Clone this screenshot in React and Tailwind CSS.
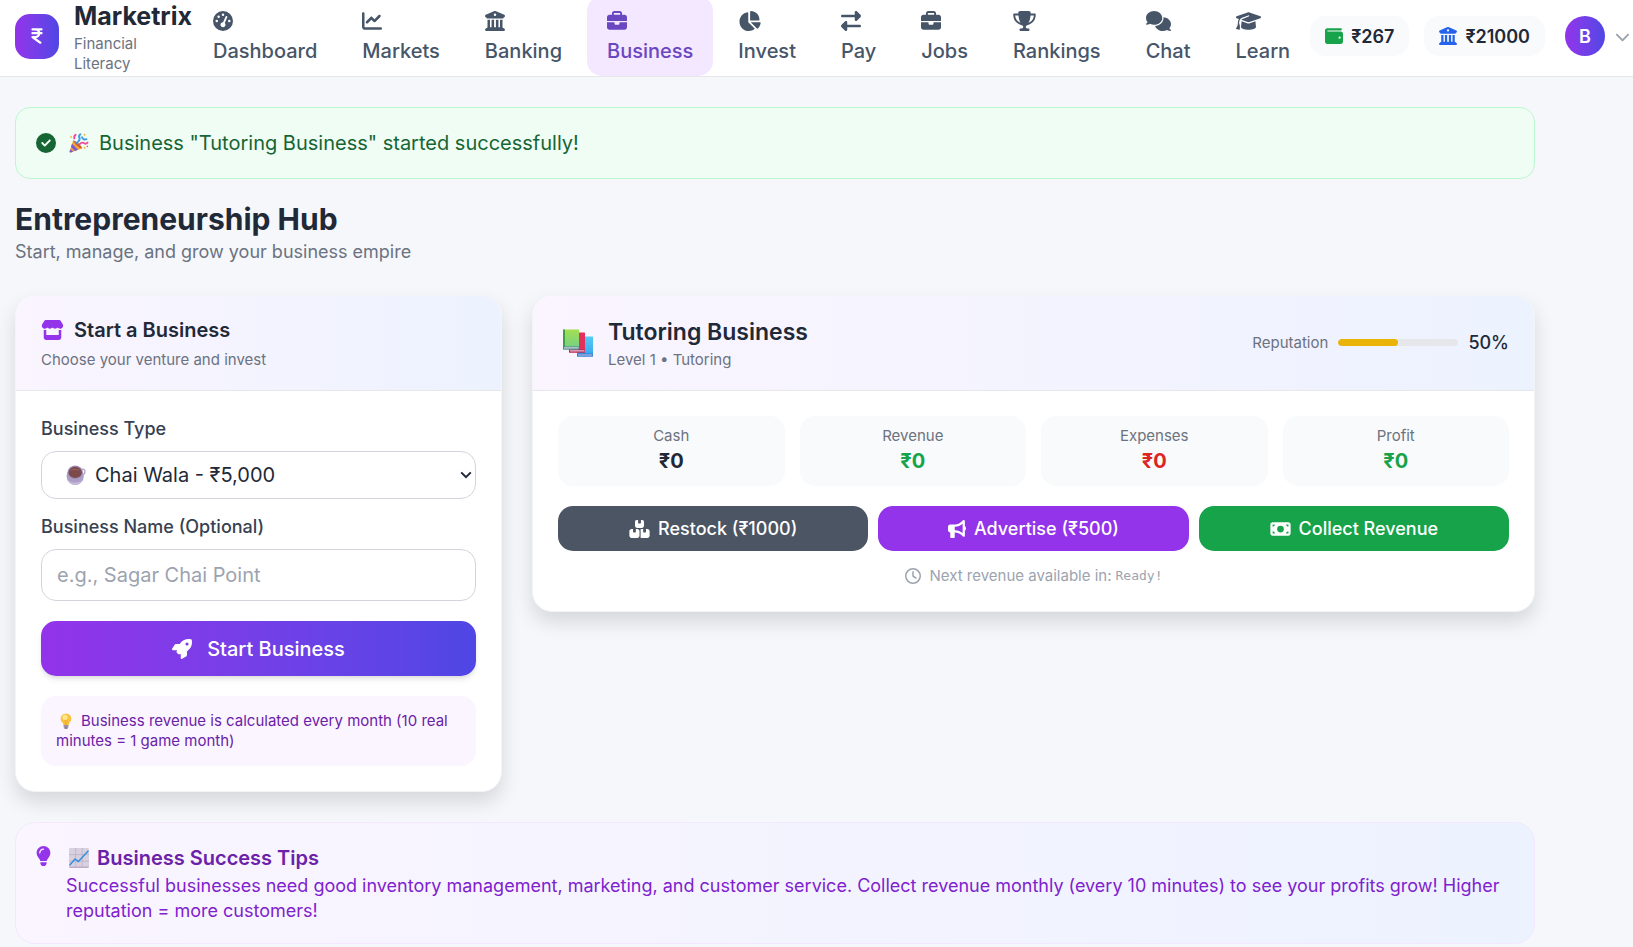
import { useState } from 'react'
import {
  FaIndianRupeeSign,
  FaGaugeHigh,
  FaChartLine,
  FaBuildingColumns,
  FaBriefcase,
  FaChartPie,
  FaRightLeft,
  FaTrophy,
  FaComments,
  FaGraduationCap,
  FaWallet,
  FaChevronDown,
  FaCircleCheck,
  FaStore,
  FaRocket,
  FaBoxesStacked,
  FaBullhorn,
  FaMoneyBill,
  FaRegClock,
  FaLightbulb,
} from 'react-icons/fa6'

const NAV = [
  { label: 'Dashboard', icon: FaGaugeHigh, width: 'w-5' },
  { label: 'Markets', icon: FaChartLine, width: 'w-5' },
  { label: 'Banking', icon: FaBuildingColumns, width: 'w-5' },
  { label: 'Business', icon: FaBriefcase, width: 'w-5', active: true },
  { label: 'Invest', icon: FaChartPie, width: 'w-[23px]' },
  { label: 'Pay', icon: FaRightLeft, width: 'w-5' },
  { label: 'Jobs', icon: FaBriefcase, width: 'w-5' },
  { label: 'Rankings', icon: FaTrophy, width: 'w-[23px]' },
  { label: 'Chat', icon: FaComments, width: 'w-[25px]' },
  { label: 'Learn', icon: FaGraduationCap, width: 'w-[25px]' },
]

const STATS = [
  { label: 'Cash', value: '₹0', color: 'text-[#1f2937]' },
  { label: 'Revenue', value: '₹0', color: 'text-[#16a34a]' },
  { label: 'Expenses', value: '₹0', color: 'text-[#dc2626]' },
  { label: 'Profit', value: '₹0', color: 'text-[#16a34a]' },
]

const ACTIONS = [
  { label: 'Restock (₹1000)', icon: FaBoxesStacked, width: 'w-[21px]', color: 'bg-[#4b5563]' },
  { label: 'Advertise (₹500)', icon: FaBullhorn, width: 'w-[18px]', color: 'bg-[#9333ea]' },
  { label: 'Collect Revenue', icon: FaMoneyBill, width: 'w-[21px]', color: 'bg-[#16a34a]' },
]

function PartyIcon({ className }) {
  return (
    <svg viewBox="0 0 20 20" className={className} aria-hidden="true">
      <path d="M4.2 7.2 L0.6 18.2 Q0.4 19.6 2 19.4 L13.4 15.2 Q9.6 9.6 4.2 7.2Z" fill="#f2a33a" />
      <path d="M3 10.8 L9 16.8 L6 17.9 L2 13.9Z M1.3 16.2 L4.2 18.6 L2 19.4 Q0.4 19.6 0.6 18.2Z" fill="#7b5bd0" />
      <path d="M4.2 7.2 Q9.8 9 13.4 15.2 Q10.6 15.4 7.8 12.4 Q5 9.4 4.2 7.2Z" fill="#c9622e" />
      <path d="M8 9.8 Q11.4 7.4 10.4 4.6 Q9.4 2.6 11.4 1.2" fill="none" stroke="#3f9be8" strokeWidth="2" strokeLinecap="round" />
      <path d="M13 4.4 Q14.6 7.4 17.4 6.2" fill="none" stroke="#3f9be8" strokeWidth="2" strokeLinecap="round" />
      <path d="M5.4 5.4 Q4.6 3.4 6.6 1.8" fill="none" stroke="#ee4d9b" strokeWidth="1.9" strokeLinecap="round" />
      <path d="M10.4 11.4 Q12.8 8.6 15.2 10.2 Q17 11.4 18.6 9.6" fill="none" stroke="#ee4d9b" strokeWidth="1.9" strokeLinecap="round" />
      <circle cx="2" cy="4" r="0.9" fill="#f4b83f" />
      <circle cx="15.6" cy="1.8" r="1" fill="#f4b83f" />
      <circle cx="18.4" cy="13.4" r="0.8" fill="#ee4d9b" />
      <circle cx="15.6" cy="14.8" r="1" fill="#f4b83f" />
    </svg>
  )
}

function TeaIcon({ className }) {
  return (
    <svg viewBox="0 0 20 20" className={className} aria-hidden="true">
      <circle cx="16.4" cy="6.8" r="2.6" fill="none" stroke="#b3a6cc" strokeWidth="1.3" />
      <circle cx="9.2" cy="11.2" r="8.6" fill="#ae9ec6" />
      <path d="M1.6 15 Q9.2 20.6 16.8 15 Q14.4 20 9.2 20 Q4 20 1.6 15Z" fill="#c6b7dc" />
      <ellipse cx="9.2" cy="7.2" rx="7.6" ry="6.8" fill="#9d8fb6" />
      <ellipse cx="9.2" cy="7.4" rx="6.6" ry="5.6" fill="#7d4a4c" />
      <path d="M3 6 Q9 1.4 15.4 6 Q9.4 4 3 6Z" fill="#935e5e" />
    </svg>
  )
}

function BulbIcon({ className }) {
  return (
    <svg viewBox="0 0 12 16" className={className} aria-hidden="true">
      <path d="M6 0.4 A5.4 5.4 0 0 1 11.4 5.8 Q11.4 8 9.6 9.6 L8.4 12.2 H3.6 L2.4 9.6 Q0.6 8 0.6 5.8 A5.4 5.4 0 0 1 6 0.4Z" fill="#fbc23c" />
      <circle cx="5" cy="4.4" r="2.6" fill="#ffe58c" />
      <path d="M5 6.6 L5.6 12 M7.2 6.6 L6.6 12" stroke="#e99b2c" strokeWidth="0.6" />
      <rect x="3.6" y="12" width="4.8" height="2.4" fill="#9a8fa5" />
      <rect x="4.2" y="14.2" width="3.6" height="1.6" rx="0.8" fill="#6d6180" />
    </svg>
  )
}

function BooksIcon({ className }) {
  return (
    <svg viewBox="0 0 30 28" className={className} aria-hidden="true">
      <defs>
        <linearGradient id="book-green" x1="0" y1="0" x2="0" y2="1">
          <stop offset="0" stopColor="#a4e04f" />
          <stop offset="1" stopColor="#6fd08a" />
        </linearGradient>
        <linearGradient id="book-blue" x1="0" y1="0" x2="0" y2="1">
          <stop offset="0" stopColor="#55cbf4" />
          <stop offset="1" stopColor="#35a4ee" />
        </linearGradient>
      </defs>
      <rect x="14" y="7.5" width="16" height="20" rx="0.6" fill="url(#book-blue)" />
      <path d="M14 24.5 H30 V27.5 H14Z" fill="#2f78c8" />
      <path d="M15 25.4 H29.4 V26.6 H15Z" fill="#cfc3ee" />
      <rect x="6" y="3.4" width="16" height="20" rx="0.6" fill="#e2305c" />
      <path d="M6 20.4 H22 V23.4 H6Z" fill="#b01f49" />
      <path d="M7 21.3 H21.6 V22.5 H7Z" fill="#e9bfdc" />
      <rect x="0" y="0.4" width="16" height="20" rx="0.6" fill="url(#book-green)" />
      <path d="M0 0.4 H2 V18 H0Z" fill="#3fa048" />
      <path d="M0 17.4 H16 V20.4 H0Z" fill="#4f7f86" />
      <path d="M1 18.2 H15.6 V19.5 H1Z" fill="#cbd9e6" />
    </svg>
  )
}

function ChartIcon({ className }) {
  return (
    <svg viewBox="0 0 20 20" className={className} aria-hidden="true">
      <rect x="0" y="0" width="20" height="20" rx="1.4" fill="#d8d0df" />
      <path d="M0 6.6 H20 M0 13.2 H20 M6.6 0 V20 M13.2 0 V20" stroke="#bdb2c8" strokeWidth="0.8" />
      <path d="M0 18.6 H20 Q20 20 18.6 20 H1.4 Q0 20 0 18.6Z" fill="#bcaec9" />
      <path d="M0.6 17.2 L6 11 L9.4 13.6 L19.4 2.8" fill="none" stroke="#338fdc" strokeWidth="1.5" strokeLinejoin="round" />
    </svg>
  )
}

function Header() {
  return (
    <header className="border-b border-[#e5e7eb] bg-white pb-1">
      <div className="flex h-[72px] items-center pl-[15px] pr-1">
        <div className="flex w-[178px] shrink-0 items-center gap-[15px]">
          <div className="flex h-[45px] w-11 shrink-0 items-center justify-center rounded-[15px] bg-linear-to-r from-[#9333ea] to-[#4f46e5]">
            <FaIndianRupeeSign className="size-[18px] text-white" />
          </div>
          <div>
            <div className="text-[25px] leading-[35px] font-bold text-[#1f2937]">Marketrix</div>
            <p className="w-20 text-[15px] leading-5 text-[#6b7280]">Financial Literacy</p>
          </div>
        </div>

        <nav className="flex shrink-0 gap-[5px]">
          {NAV.map((item) => (
            <a
              key={item.label}
              href="#"
              className={
                item.active
                  ? 'rounded-[15px] bg-[#f3e8ff] px-5 py-2.5 text-xl leading-[30px] font-medium text-[#6b46c1]'
                  : 'rounded-[15px] px-5 py-2.5 text-xl leading-[30px] font-medium text-[#475569]'
              }
            >
              <span className="flex h-[30px] items-center">
                <item.icon className={`h-5 ${item.width}`} />
              </span>
              {item.label}
            </a>
          ))}
        </nav>

        <div className="ml-auto flex shrink-0 items-center text-lg leading-[25px] font-semibold text-[#1f2937]">
          <div className="flex h-10 items-center gap-2 rounded-[15px] bg-[#f9fafb] px-[15px]">
            <FaWallet className="size-[18px] text-[#16a34a]" />
            ₹267
          </div>
          <div className="ml-[15px] flex h-10 items-center gap-2 rounded-[15px] bg-[#f9fafb] px-[15px]">
            <FaBuildingColumns className="size-[18px] text-[#2563eb]" />
            ₹21000
          </div>
          <button type="button" aria-label="Account menu" className="ml-5 flex items-center gap-2.5">
            <span className="flex size-10 items-center justify-center rounded-full bg-linear-to-r from-[#9333ea] to-[#4f46e5] text-white">
              B
            </span>
            <FaChevronDown className="size-[15px] text-[#9ca3af]" />
          </button>
        </div>
      </div>
    </header>
  )
}

function StartBusinessCard() {
  const [type, setType] = useState('chai')
  const [name, setName] = useState('')

  return (
    <section className="w-[487px] shrink-0 overflow-hidden rounded-[20px] border border-[#f3f4f6] bg-white shadow-[0_10px_20px_rgba(0,0,0,0.13)]">
      <div className="border-b border-[#e5e7eb] bg-linear-to-r from-[#faf5ff] to-[#edf2ff] px-[25px] pt-[19px] pb-5">
        <h2 className="flex items-center gap-2.5 text-xl leading-[30px] font-semibold text-[#1f2937]">
          <FaStore className="h-5 w-[23px] text-[#9333ea]" />
          Start a Business
        </h2>
        <p className="mt-[5px] text-[15px] leading-5 text-[#6b7280]">Choose your venture and invest</p>
      </div>

      <form className="p-[25px]" onSubmit={(e) => e.preventDefault()}>
        <label htmlFor="business-type" className="block text-lg leading-[25px] font-medium text-[#374151]">
          Business Type
        </label>
        <div className="relative mt-2.5">
          <select
            id="business-type"
            value={type}
            onChange={(e) => setType(e.target.value)}
            className="block h-12 w-full appearance-none rounded-[15px] border border-[#d1d5db] bg-white pl-[53px] text-xl text-[#1f2937]"
          >
            <option value="chai">Chai Wala - ₹5,000</option>
          </select>
          <TeaIcon className="pointer-events-none absolute top-3.5 left-[25px] size-5" />
          <svg
            viewBox="0 0 12 8"
            className="pointer-events-none absolute top-5 right-1 h-2 w-3 text-[#1f2937]"
            aria-hidden="true"
          >
            <path d="M1.2 1.4 L6 6.2 L10.8 1.4" fill="none" stroke="currentColor" strokeWidth="2" />
          </svg>
        </div>

        <label htmlFor="business-name" className="mt-[15px] block text-lg leading-[25px] font-medium text-[#374151]">
          Business Name (Optional)
        </label>
        <input
          id="business-name"
          type="text"
          value={name}
          onChange={(e) => setName(e.target.value)}
          placeholder="e.g., Sagar Chai Point"
          className="mt-2.5 block h-[52px] w-full rounded-[15px] border border-[#d1d5db] bg-white px-[15px] text-xl placeholder:text-[#9ca3af]"
        />

        <button
          type="submit"
          className="mt-5 flex h-[55px] w-full items-center justify-center gap-[15px] rounded-[15px] bg-linear-to-r from-[#9333ea] to-[#4f46e5] text-xl font-medium text-white shadow-md"
        >
          <FaRocket className="size-5" />
          Start Business
        </button>

        <p className="mt-5 rounded-[15px] bg-[#faf5ff] p-[15px] text-[15px] leading-5 text-[#6b21a8]">
          <BulbIcon className="mr-[9px] ml-1 inline-block h-4 w-3 align-[-3px]" />
          Business revenue is calculated every month (10 real minutes = 1 game month)
        </p>
      </form>
    </section>
  )
}

function BusinessCard() {
  return (
    <section className="min-w-0 flex-1 overflow-hidden rounded-[20px] border border-[#f3f4f6] bg-white shadow-[0_10px_20px_rgba(0,0,0,0.13)]">
      <div className="flex items-center justify-between border-b border-[#e5e7eb] bg-linear-to-r from-[#faf5ff] to-[#edf2ff] px-[25px] pt-[19px] pb-5">
        <div className="flex items-center gap-[15px]">
          <BooksIcon className="ml-[5px] h-7 w-[30px]" />
          <div>
            <h3 className="text-[23px] leading-[35px] font-semibold text-[#1f2937]">Tutoring Business</h3>
            <p className="text-[15px] leading-5 text-[#6b7280]">Level 1 • Tutoring</p>
          </div>
        </div>
        <div className="flex items-center gap-2.5">
          <span className="text-[15px] leading-5 text-[#6b7280]">Reputation</span>
          <div className="h-[7px] w-[120px] overflow-hidden rounded-full bg-[#e5e7eb]">
            <div className="h-full w-1/2 rounded-full bg-[#eab308]" />
          </div>
          <span className="text-lg leading-[25px] font-medium text-[#1f2937]">50%</span>
        </div>
      </div>

      <div className="p-[25px]">
        <div className="grid grid-cols-4 gap-[15px]">
          {STATS.map((s) => (
            <div key={s.label} className="rounded-[15px] bg-[#f9fafb] p-2.5 text-center">
              <p className="text-[15px] leading-5 text-[#6b7280]">{s.label}</p>
              <p className={`text-xl leading-[30px] font-bold ${s.color}`}>{s.value}</p>
            </div>
          ))}
        </div>

        <div className="mt-5 grid grid-cols-3 gap-2.5">
          {ACTIONS.map((a) => (
            <button
              key={a.label}
              type="button"
              className={`flex h-[45px] items-center justify-center gap-2 rounded-[15px] text-lg font-medium text-white ${a.color}`}
            >
              <a.icon className={`h-[18px] ${a.width}`} />
              {a.label}
            </button>
          ))}
        </div>

        <p className="mt-[15px] flex items-center justify-center text-[15px] leading-5 text-[#9ca3af]">
          <FaRegClock className="mr-[9px] size-4" />
          Next revenue available in:
          <span className="ml-1 font-['DejaVu_Sans_Mono',monospace] text-[13px]">Ready!</span>
        </p>
      </div>
    </section>
  )
}

export default function App() {
  return (
    <div className="min-h-screen bg-[#f5f7fb] font-['Inter',sans-serif]">
      <Header />

      <main className="max-w-[1550px] px-[15px] pt-[30px]">
        <div className="flex items-center rounded-[15px] border border-[#bbf7d0] bg-[#f0fdf4] p-5 text-xl leading-[30px] text-[#166534]">
          <FaCircleCheck className="size-5" />
          <PartyIcon className="mr-2.5 ml-[13px] size-5" />
          Business "Tutoring Business" started successfully!
        </div>

        <div className="pt-5">
          <h1 className="text-[30px] leading-10 font-bold text-[#1f2937]">Entrepreneurship Hub</h1>
          <p className="text-lg leading-[25px] text-[#6b7280]">Start, manage, and grow your business empire</p>
        </div>

        <div className="mt-[31px] flex items-start gap-[30px]">
          <StartBusinessCard />
          <BusinessCard />
        </div>

        <section className="mt-[30px] flex rounded-[20px] border border-[#f3e8ff] bg-linear-to-r from-[#faf5ff] to-[#edf2ff] p-5">
          <FaLightbulb className="mt-[3px] h-5 w-[15px] shrink-0 text-[#9333ea]" />
          <div className="ml-[15px]">
            <h4 className="flex items-center gap-2 text-xl leading-[30px] font-semibold text-[#6b21a8]">
              <ChartIcon className="ml-[3px] size-5" />
              Business Success Tips
            </h4>
            <p className="text-lg leading-[25px] text-[#7e22ce]">
              Successful businesses need good inventory management, marketing, and customer service. Collect revenue
              monthly (every 10 minutes) to see your profits grow! Higher reputation = more customers!
            </p>
          </div>
        </section>
      </main>
    </div>
  )
}
